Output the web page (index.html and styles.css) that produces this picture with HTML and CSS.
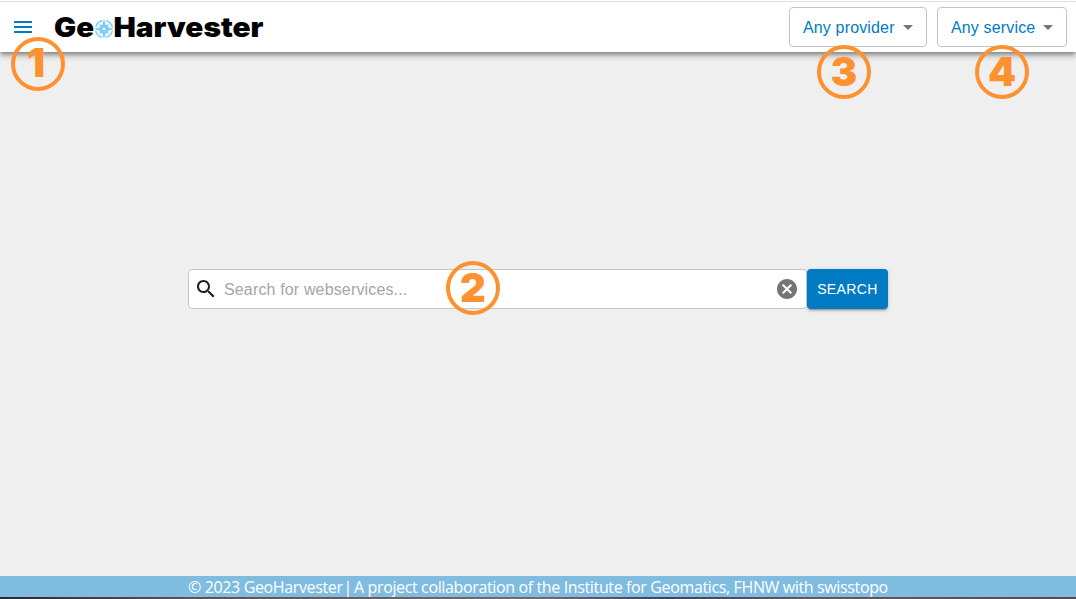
FILE: index.html
```html
<!DOCTYPE html>
<html lang="en">
<head>
<meta charset="utf-8">
<title>GeoHarvester</title>
<link rel="stylesheet" href="styles.css">
</head>
<body>
<div class="app">
  <header class="bar">
    <button class="menu" aria-label="Menu">
      <svg width="24" height="24" viewBox="0 0 24 24"><path fill="currentColor" d="M3 18h18v-2H3v2zm0-5h18v-2H3v2zm0-7v2h18V6H3z"/></svg>
      <span class="badge badge-menu">1</span>
    </button>
    <svg class="logo" width="212" height="40" viewBox="0 0 212 40">
      <text x="0" y="30" textLength="40" lengthAdjust="spacingAndGlyphs">Ge</text>
      <g transform="translate(50 22)">
        <circle class="ring" r="8.500"/>
        <path class="rose" d="M0-10 2.400-2.400 10 0 2.400 2.400 0 10-2.400 2.400-10 0-2.400-2.400z"/>
        <path class="rose" d="M0-3 5-5 3 0 5 5 0 3-5 5-3 0-5-5z"/>
        <circle r="1.300" fill="#fff"/>
      </g>
      <text x="59.500" y="30" textLength="150" lengthAdjust="spacingAndGlyphs">Harvester</text>
    </svg>
    <div class="filters">
      <button class="select provider">Any provider<i class="caret"></i><span class="badge badge-provider">3</span></button>
      <button class="select service">Any service<i class="caret"></i><span class="badge badge-service">4</span></button>
    </div>
  </header>
  <main class="main">
    <div class="search">
      <div class="field">
        <svg class="lens" width="24" height="24" viewBox="0 0 24 24"><path fill="currentColor" d="M15.500 14h-.79l-.28-.27C15.410 12.590 16 11.110 16 9.500 16 5.910 13.090 3 9.500 3S3 5.910 3 9.500 5.910 16 9.500 16c1.610 0 3.090-.59 4.230-1.570l.27.28v.79l5 4.990L20.490 19l-4.990-5zm-6 0C7.010 14 5 11.990 5 9.500S7.010 5 9.500 5 14 7.010 14 9.500 11.990 14 9.500 14z"/></svg>
        <span class="placeholder">Search for webservices...</span>
        <svg class="clear" width="24" height="24" viewBox="0 0 24 24"><path fill="currentColor" d="M12 2C6.470 2 2 6.470 2 12s4.470 10 10 10 10-4.470 10-10S17.530 2 12 2zm5 13.590L15.590 17 12 13.410 8.410 17 7 15.590 10.590 12 7 8.410 8.410 7 12 10.590 15.590 7 17 8.410 13.410 12 17 15.590z"/></svg>
        <span class="badge badge-search">2</span>
      </div>
      <button class="go">SEARCH</button>
    </div>
  </main>
  <footer class="footer">
    <span class="owner">© 2023 GeoHarvester</span>
    <span class="divider">|</span>
    <span class="credit">A project collaboration of the Institute for Geomatics, FHNW with swisstopo</span>
  </footer>
</div>
</body>
</html>
```
FILE: styles.css
```css
* { box-sizing: border-box; }
body { margin: 0; font-family: "Liberation Sans", Arial, sans-serif; }
button { font: inherit; cursor: pointer; }
.app { height: 599px; display: flex; flex-direction: column; overflow: hidden; background: #efefef; }
.bar {
  height: 52px; flex: none; display: flex; align-items: center;
  padding: 2px 9px 0 11px; background: #fff;
  box-shadow: 0 2px 4px -1px rgba(0,0,0,.3), 0 4px 5px rgba(0,0,0,.2), 0 1px 10px rgba(0,0,0,.16), inset 0 1px #fff, inset 0 2px #dedede;
}
.menu { position: relative; width: 24px; height: 24px; padding: 0; border: 0; background: none; color: #007ac3; }
.menu svg { display: block; }
.logo { margin-left: 19px; display: block; overflow: visible; }
.logo text { font: 900 27px Inter, sans-serif; fill: #000; }
.ring { fill: none; stroke: #7fcdf7; stroke-width: 1.500; stroke-dasharray: 9.500 3.850; stroke-dashoffset: -1.930; }
.rose { fill: #7fcdf7; }
.filters { margin-left: auto; display: flex; gap: 10px; }
.select {
  position: relative; height: 40px; padding: 1px 13px 0; display: flex; align-items: center; justify-content: space-between;
  background: #fff; border: 1px solid #c4c4c4; border-radius: 4px; color: #007ac3; font-size: 16px; line-height: 19px; letter-spacing: .15px;
}
.provider { width: 138px; }
.service { width: 130px; }
.caret { border: 5px solid transparent; border-top-color: #757575; border-bottom: 0; }
.badge {
  position: absolute; z-index: 2; width: 54px; height: 54px; border: 4px solid #ff9130; border-radius: 50%;
  display: flex; align-items: center; justify-content: center;
  font: 900 40px/46px Inter, sans-serif; letter-spacing: 0; color: #ff9130;
}
.badge-menu { left: 0; top: 22px; padding: 0 4px 3px 0; }
.badge-provider { left: 27px; top: 37px; }
.badge-service { left: 37px; top: 37px; }
.badge-search { left: 257px; top: -9px; }
.main { flex: 1; display: flex; justify-content: center; align-items: flex-start; padding-top: 217px; }
.search { display: flex; width: 700px; }
.field {
  position: relative; width: 619px; height: 40px; display: flex; align-items: center; padding: 0 7px 0 5px;
  background: #fff; border: 1px solid #c4c4c4; border-radius: 4px;
}
.lens { color: #1c1c1c; }
.placeholder { flex: 1; margin-left: 6px; padding-top: 2px; font-size: 16px; letter-spacing: .15px; color: #a5a5a5; }
.clear { color: #757575; }
.go {
  width: 81px; height: 40px; padding: 0; border: 0; border-radius: 4px; background: #007ac3; color: #fff;
  font-size: 14px; letter-spacing: .4px;
  box-shadow: 0 3px 1px -2px rgba(0,0,0,.2), 0 2px 2px rgba(0,0,0,.14), 0 1px 5px rgba(0,0,0,.12);
}
.footer {
  height: 23px; flex: none; display: flex; justify-content: center; white-space: nowrap;
  font: 16px/23px "Open Sans", "Noto Sans", sans-serif; color: #fff; letter-spacing: -.365px;
  background: linear-gradient(90deg, #2d282e, #5e5255 18%, #77696d 50%, #3e4257 62%, #66575a 75%, #564a4d) 0 100% / 100% 2px no-repeat #7fbce0;
}
.owner { width: 155.500px; }
.divider { width: 10.500px; }
.credit { width: 534px; }
```
